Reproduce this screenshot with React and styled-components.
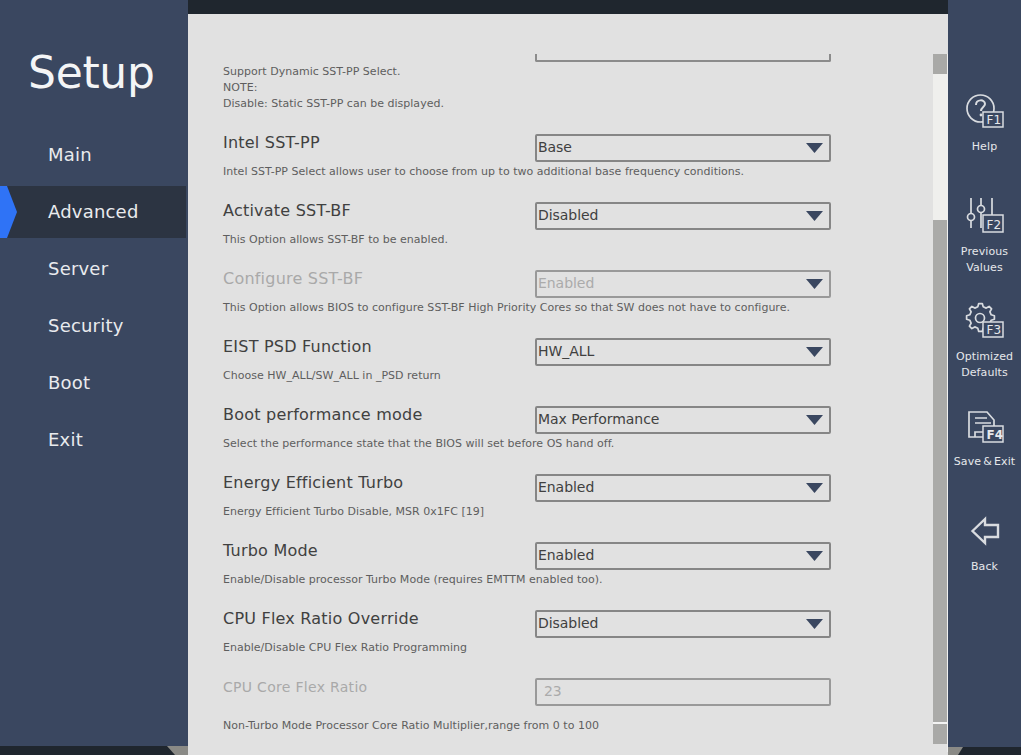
import React from "react";
import styled, { createGlobalStyle } from "styled-components";

const Global = createGlobalStyle`
  html, body { margin: 0; padding: 0; height: 100%; overflow: hidden; background: #1f262e; }
  #root { height: 755px; }
  * { box-sizing: border-box; }
`;

const Page = styled.div`
  display: grid;
  grid-template-columns: 188px 1fr 73px;
  width: 1021px;
  height: 755px;
  overflow: hidden;
  font-family: "DejaVu Sans", sans-serif;
  background: #1f262e;
`;

const LeftPanel = styled.nav`
  position: relative;
  height: 746px;
  background: #3a4760;
  padding-top: 44px;
`;

const LeftCorner = styled.div`
  position: absolute;
  left: 167px;
  top: 746px;
  width: 21px;
  height: 9px;
  background: #8a8a86;
  clip-path: polygon(0 0, 100% 0, 100% 100%, 8px 100%);
`;

const RightCorner = styled.div`
  position: absolute;
  left: 0;
  top: 747px;
  width: 15px;
  height: 8px;
  background: #8a8a86;
  clip-path: polygon(0 0, 100% 0, 10px 100%, 0 100%);
`;

const Title = styled.h1`
  margin: 0 0 0 28px;
  height: 57px;
  font-size: 44px;
  line-height: 57px;
  font-weight: 400;
  letter-spacing: -0.3px;
  color: #f4f5f6;
`;

const Menu = styled.ul`
  list-style: none;
  margin: 28px 0 0;
  padding: 0;
  display: flex;
  flex-direction: column;
  gap: 5px;
`;

const MenuItem = styled.li`
  position: relative;
  width: 186px;
  height: 52px;
  padding: 0 0 2px 48px;
  display: flex;
  align-items: center;
  font-size: 18px;
  letter-spacing: 0.2px;
  color: #e9ebee;
  background: ${p => (p.$active ? "#2c3442" : "transparent")};
`;

const ActiveMarker = styled.span`
  position: absolute;
  left: 0;
  top: 0;
  width: 17px;
  height: 52px;
  background: #2f73f6;
  clip-path: polygon(0 0, 7px 0, 17px 50%, 7px 100%, 0 100%);
`;

const Main = styled.main`
  display: flex;
  flex-direction: column;
  margin-top: 14px;
  background: #e1e1e1;
  height: 741px;
`;

const Viewport = styled.div`
  margin-top: 40px;
  display: flex;
  height: 698px;
`;

const Clip = styled.div`
  flex: 1;
  overflow: hidden;
  padding-left: 35px;
`;

const Scrollbar = styled.div`
  display: flex;
  flex-direction: column;
  width: 14px;
  height: 690px;
  background: #efefef;
`;

const ScrollEnd = styled.div`
  height: 20px;
  background: #a9a9a7;
`;

const ScrollTrack = styled.div`
  height: 146px;
  background: #efefed;
`;

const ScrollThumb = styled.div`
  height: 502px;
  background: #aaaaa8;
`;

const ScrollGap = styled.div`
  height: 2px;
  background: #f3f3f3;
`;

const RightEdge = styled.div`
  width: 1px;
  background: #f0f0f0;
  height: 100%;
`;

const List = styled.div`
  margin-top: -8px;
`;

const TopRow = styled.div`
  height: 88px;
  display: flex;
  flex-direction: column;
`;

const Clipped = styled.div`
  margin-left: 312px;
  width: 296px;
  height: 16px;
  border: 2px solid #8b8b8b;
  border-top: 0;
  border-radius: 0 0 2px 2px;
`;

const Row = styled.div`
  display: grid;
  grid-template-columns: 312px 296px;
  grid-template-rows: 28px 1fr;
  height: 68px;
`;

const Label = styled.div`
  font-size: ${p => (p.$small ? "14px" : "16px")};
  line-height: 24px;
  margin-top: -3px;
  letter-spacing: ${p => (p.$small ? "0.3px" : "0.22px")};
  color: ${p => (p.$disabled ? "#a9a9a9" : "#404040")};
`;

const Select = styled.div`
  position: relative;
  display: flex;
  align-items: center;
  height: 28px;
  padding: 0 0 2px 1px;
  border: 2px solid ${p => (p.$disabled ? "#999" : "#868686")};
  border-radius: 2px;
  font-size: 14px;
  letter-spacing: -0.05px;
  color: ${p => (p.$disabled ? "#ababab" : "#404040")};
`;

const Arrow = styled.span`
  position: absolute;
  right: 6px;
  top: 7px;
  width: 17px;
  height: 10px;
  background: #3a4760;
  clip-path: polygon(0 0, 100% 0, 50% 100%);
`;

const NumberBox = styled(Select)`
  padding-left: 7px;
`;

const Help = styled.div`
  grid-column: 1 / span 2;
  font-size: 11px;
  line-height: 16px;
  margin-top: ${p => (p.$tall ? "12px" : "2px")};
  letter-spacing: 0.02px;
  color: #5e5e5e;
  white-space: nowrap;
`;

const RightPanel = styled.aside`
  position: relative;
  height: 747px;
  background: #3a4760;
  display: flex;
  flex-direction: column;
  padding-top: 90px;
`;

const FKey = styled.div`
  height: 105px;
  display: flex;
  flex-direction: column;
  align-items: center;
  color: #e6e8eb;
  font-size: 11px;
  line-height: 16px;
  letter-spacing: 0.1px;
  word-spacing: -1.5px;
  text-align: center;
`;

const FIcon = styled.svg`
  display: block;
  width: 44px;
  height: 44px;
  margin-bottom: 5px;
  flex: none;
`;

const KeyText = styled.text`
  font-family: "DejaVu Sans", sans-serif;
  font-size: 12px;
  font-weight: ${p => (p.$bold ? 700 : 400)};
  fill: #e6e8eb;
`;

const KeyBadge = ({ label, y = 22, h = 15, bold }) => (
  <>
    <rect x="20" y={y} width="20" height={h} fill="#3a4760" stroke="#d9dce0" strokeWidth="1.5" />
    <KeyText x="23.5" y={y + h - 3} $bold={bold}>{label}</KeyText>
  </>
);

const strokes = { fill: "none", stroke: "#d9dce0", strokeWidth: 1.7 };

const gearPath = (() => {
  const cx = 17.5, cy = 17.5, teeth = 8, outer = 14, inner = 11;
  const pts = [];
  for (let i = 0; i < teeth; i++) {
    const a = (i / teeth) * Math.PI * 2 - Math.PI / 2;
    const w = Math.PI / teeth;
    [[inner, -0.62], [outer, -0.32], [outer, 0.32], [inner, 0.62]].forEach(([r, k]) => {
      const t = a + k * w;
      pts.push(`${(cx + r * Math.cos(t)).toFixed(1)} ${(cy + r * Math.sin(t)).toFixed(1)}`);
    });
  }
  return `M${pts.join("L")}Z`;
})();

const HelpIcon = () => (
  <FIcon viewBox="0 0 44 44">
    <circle cx="17.5" cy="18.5" r="13.5" {...strokes} />
    <path d="M13 15c0-6 9-6 9-1 0 3-4 3-4 7" {...strokes} strokeWidth="2" />
    <circle cx="18" cy="25" r="1.4" fill="#d9dce0" />
    <KeyBadge label="F1" />
  </FIcon>
);

const SlidersIcon = () => (
  <FIcon viewBox="0 0 44 44">
    <path d="M8 3v15.5M8 25.5V33M18 3v7.5M18 17.5V33M29 3v17" {...strokes} />
    <circle cx="8" cy="22" r="3.5" {...strokes} />
    <circle cx="18" cy="14" r="3.5" {...strokes} />
    <KeyBadge label="F2" y={20} h={17} />
  </FIcon>
);

const GearIcon = () => (
  <FIcon viewBox="0 0 44 44">
    <path d={gearPath} {...strokes} strokeLinejoin="round" />
    <circle cx="17" cy="18" r="4.5" {...strokes} />
    <KeyBadge label="F3" />
  </FIcon>
);

const SaveIcon = () => (
  <FIcon viewBox="0 0 44 44">
    <path d="M20 32H6V7h18l7 8v6" {...strokes} />
    <path d="M12 13h12M12 18h16" {...strokes} />
    <path d="M12 32v-5h8" {...strokes} />
    <KeyBadge label="F4" y={21} h={16} bold />
  </FIcon>
);

const BackIcon = () => (
  <FIcon viewBox="0 0 44 44">
    <path d="M9.5 21L22 9v6h13v12H22v6z" fill="none" stroke="#d9dce0" strokeWidth="2.4" />
  </FIcon>
);

const rows = [
  { label: "Intel SST-PP", value: "Base", help: "Intel SST-PP Select allows user to choose from up to two additional base frequency conditions." },
  { label: "Activate SST-BF", value: "Disabled", help: "This Option allows SST-BF to be enabled." },
  { label: "Configure SST-BF", value: "Enabled", disabled: true, help: "This Option allows BIOS to configure SST-BF High Priority Cores so that SW does not have to configure." },
  { label: "EIST PSD Function", value: "HW_ALL", help: "Choose HW_ALL/SW_ALL in _PSD return" },
  { label: "Boot performance mode", value: "Max Performance", help: "Select the performance state that the BIOS will set before OS hand off." },
  { label: "Energy Efficient Turbo", value: "Enabled", help: "Energy Efficient Turbo Disable, MSR 0x1FC [19]" },
  { label: "Turbo Mode", value: "Enabled", help: "Enable/Disable processor Turbo Mode (requires EMTTM enabled too)." },
  { label: "CPU Flex Ratio Override", value: "Disabled", help: "Enable/Disable CPU Flex Ratio Programming" },
  { label: "CPU Core Flex Ratio", value: "23", disabled: true, number: true, help: "Non-Turbo Mode Processor Core Ratio Multiplier,range from 0 to 100" },
];

const menu = ["Main", "Advanced", "Server", "Security", "Boot", "Exit"];

const keys = [
  { icon: <HelpIcon />, text: ["Help"] },
  { icon: <SlidersIcon />, text: ["Previous", "Values"] },
  { icon: <GearIcon />, text: ["Optimized", "Defaults"] },
  { icon: <SaveIcon />, text: ["Save & Exit"] },
  { icon: <BackIcon />, text: ["Back"] },
];

export default function App() {
  return (
    <Page>
      <Global />
      <LeftPanel>
        <Title>Setup</Title>
        <Menu>
          {menu.map(m => (
            <MenuItem key={m} $active={m === "Advanced"}>
              {m === "Advanced" && <ActiveMarker />}
              {m}
            </MenuItem>
          ))}
        </Menu>
        <LeftCorner />
      </LeftPanel>
      <Main>
        <Viewport>
          <Clip>
            <List>
              <TopRow>
                <Clipped />
                <Help>
                  Support Dynamic SST-PP Select.
                  <br />
                  NOTE:
                  <br />
                  Disable: Static SST-PP can be displayed.
                </Help>
              </TopRow>
              {rows.map(r => (
                <Row key={r.label}>
                  <Label $disabled={r.disabled} $small={r.number}>{r.label}</Label>
                  {r.number ? (
                    <NumberBox $disabled={r.disabled}>{r.value}</NumberBox>
                  ) : (
                    <Select $disabled={r.disabled}>
                      {r.value}
                      <Arrow />
                    </Select>
                  )}
                  <Help $tall={r.number}>{r.help}</Help>
                </Row>
              ))}
            </List>
          </Clip>
          <Scrollbar>
            <ScrollEnd />
            <ScrollTrack />
            <ScrollThumb />
            <ScrollGap />
            <ScrollEnd />
          </Scrollbar>
          <RightEdge />
        </Viewport>
      </Main>
      <RightPanel>
        {keys.map(k => (
          <FKey key={k.text[0]}>
            {k.icon}
            {k.text.map(t => (
              <div key={t}>{t}</div>
            ))}
          </FKey>
        ))}
        <RightCorner />
      </RightPanel>
    </Page>
  );
}
